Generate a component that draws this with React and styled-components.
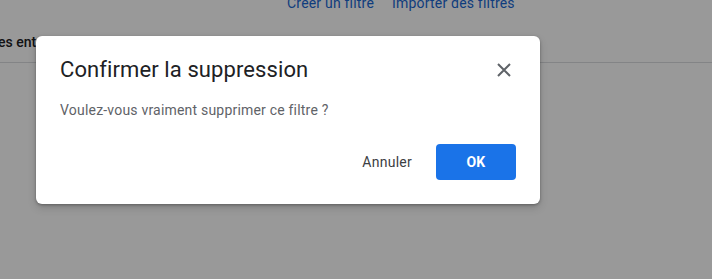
import styled, { createGlobalStyle } from 'styled-components';

const GlobalStyle = createGlobalStyle`
  html, body {
    margin: 0;
    padding: 0;
    background: #ffffff;
    font-family: Roboto, 'Liberation Sans', sans-serif;
    overflow: hidden;
  }
`;

const Page = styled.div`
  position: relative;
  width: 712px;
  height: 279px;
  overflow: hidden;
`;

const TopLinks = styled.div`
  display: flex;
  gap: 18px;
  margin-top: -7px;
  padding-left: 287px;
  height: 20px;
  align-items: center;
`;

const Link = styled.a`
  color: #1967d2;
  font-size: 14px;
  letter-spacing: 0.2px;
  text-decoration: none;
`;

const HeaderRow = styled.div`
  margin-top: 21px;
  padding-bottom: 12px;
  border-bottom: 1px solid #dadce0;
  font-size: 14px;
  font-weight: 500;
  color: #202124;
  white-space: nowrap;
  margin-left: -2px;
`;

const Overlay = styled.div`
  position: absolute;
  inset: 0;
  background: rgba(0, 0, 0, 0.4);
  padding: 36px;
`;

const Dialog = styled.div`
  width: 504px;
  height: 168px;
  box-sizing: border-box;
  background: #fff;
  border-radius: 6px;
  box-shadow: 0 1px 3px rgba(0, 0, 0, 0.3), 0 4px 8px rgba(0, 0, 0, 0.15);
  padding: 20px 24px 24px;
  display: flex;
  flex-direction: column;
`;

const TitleRow = styled.div`
  display: flex;
  justify-content: space-between;
  align-items: center;
`;

const Title = styled.h2`
  margin: 0;
  font-size: 22px;
  font-weight: 400;
  color: #202124;
  line-height: 28px;
  letter-spacing: 0.1px;
`;

const CloseButton = styled.button`
  border: none;
  background: none;
  padding: 0;
  width: 24px;
  height: 24px;
  display: flex;
  align-items: center;
  justify-content: center;
  cursor: pointer;
`;

const Message = styled.p`
  margin: 16px 0 0;
  font-size: 14px;
  letter-spacing: 0.2px;
  color: #5f6368;
  line-height: 20px;
`;

const Actions = styled.div`
  margin-top: auto;
  display: flex;
  justify-content: flex-end;
  align-items: center;
  gap: 24px;
`;

const TextButton = styled.button`
  border: none;
  background: none;
  font-family: inherit;
  font-size: 14px;
  letter-spacing: 0.25px;
  color: #3c4043;
  padding: 0;
  cursor: pointer;
`;

const PrimaryButton = styled.button`
  border: none;
  width: 80px;
  height: 36px;
  border-radius: 4px;
  background: #1a73e8;
  color: #fff;
  font-family: inherit;
  font-size: 14px;
  font-weight: 700;
  letter-spacing: 0.25px;
  cursor: pointer;
`;

const App = () => (
  <>
    <GlobalStyle />
    <Page>
      <TopLinks>
        <Link href="#">Créer un filtre</Link>
        <Link href="#">Importer des filtres</Link>
      </TopLinks>
      <HeaderRow>es entrants correspondant à vos critères seront traités automatiquement :</HeaderRow>
      <Overlay>
        <Dialog>
          <TitleRow>
            <Title>Confirmer la suppression</Title>
            <CloseButton aria-label="Fermer">
              <svg width="16" height="16" viewBox="0 0 16 16">
                <path d="M2 2 L14 14 M14 2 L2 14" stroke="#5f6368" strokeWidth="2" />
              </svg>
            </CloseButton>
          </TitleRow>
          <Message>Voulez-vous vraiment supprimer ce filtre ?</Message>
          <Actions>
            <TextButton>Annuler</TextButton>
            <PrimaryButton>OK</PrimaryButton>
          </Actions>
        </Dialog>
      </Overlay>
    </Page>
  </>
);

export default App;
